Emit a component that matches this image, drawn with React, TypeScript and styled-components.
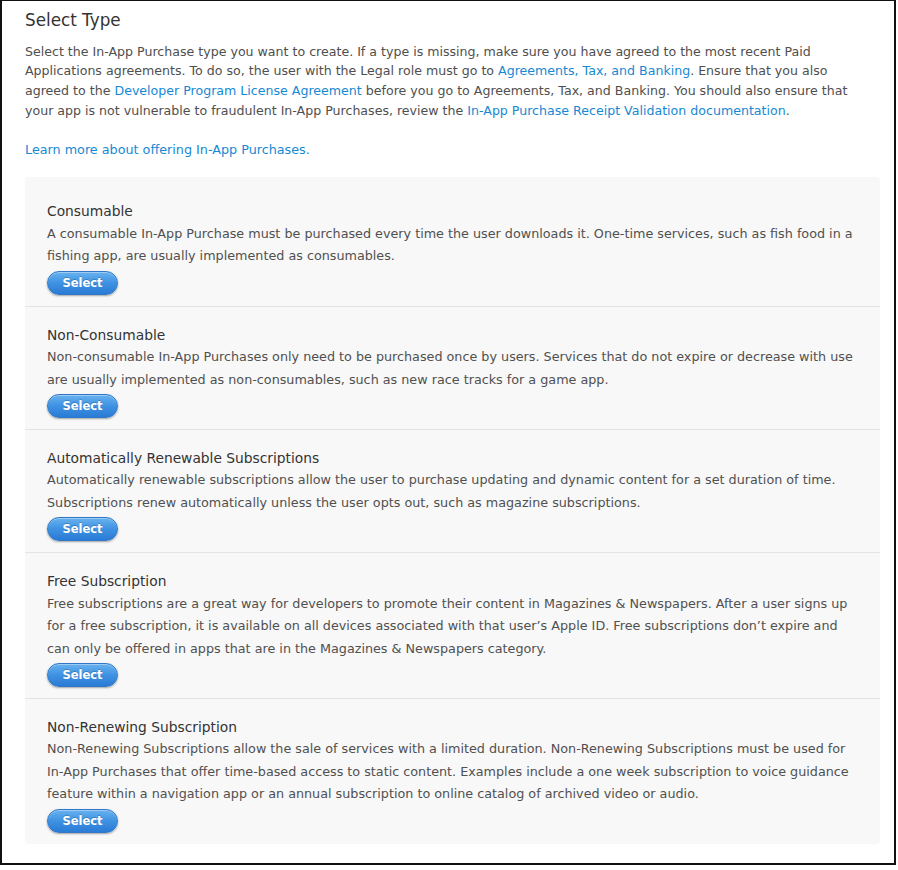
import React from "react";
import styled, { createGlobalStyle } from "styled-components";

const GlobalStyle = createGlobalStyle`
  html, body {
    margin: 0;
    padding: 0;
    background: #ffffff;
  }
  * { box-sizing: border-box; }
`;

const Frame = styled.div`
  width: 896px;
  border: 2px solid #111111;
  border-top-width: 1px;
  background: #ffffff;
  padding: 8px 14px 19px 23px;
  font-family: "DejaVu Sans", "Liberation Sans", sans-serif;
  -webkit-font-smoothing: antialiased;
`;

const Heading = styled.h1`
  margin: 0;
  font-size: 16.8px;
  line-height: 22px;
  font-weight: normal;
  color: #333333;
`;

const Intro = styled.p`
  margin: 10.5px 0 0;
  font-size: 12.6px;
  line-height: 19.75px;
  color: #4f4f4f;
  white-space: nowrap;
`;

const Learn = styled.p`
  margin: 19px 0 0;
  font-size: 12.75px;
  line-height: 19.75px;
`;

const Link = styled.a`
  color: #1689d4;
  text-decoration: none;
  cursor: pointer;
`;

const Panel = styled.div`
  margin-top: 18px;
  background: #f8f8f8;
  border-radius: 4px;
  padding: 6px 0 0;
  display: flex;
  flex-direction: column;
`;

const Row = styled.section<{ $last?: boolean }>`
  padding: 18px 22px 10.75px;
  border-bottom: ${(p) => (p.$last ? "none" : "1px solid #e4e4e4")};
  display: flex;
  flex-direction: column;
  align-items: flex-start;
`;

const RowTitle = styled.h2`
  margin: 0;
  font-size: 13.8px;
  line-height: 21.5px;
  font-weight: normal;
  color: #333333;
`;

const Desc = styled.p`
  margin: 0;
  font-size: 12.75px;
  line-height: 22.5px;
  color: #505050;
  white-space: nowrap;
`;

const Line = styled.span`
  display: block;
`;

const SelectButton = styled.button`
  margin-top: 3px;
  width: 71px;
  height: 24px;
  border-radius: 12px;
  border: 1px solid #2f78c9;
  background: linear-gradient(to bottom, #68b2ef 0%, #3e92e2 50%, #2a7bd5 100%);
  box-shadow: 0 1px 2px rgba(0, 0, 0, 0.35), inset 0 1px 0 rgba(255, 255, 255, 0.35);
  color: #ffffff;
  font-family: "DejaVu Sans", "Liberation Sans", sans-serif;
  font-weight: bold;
  font-size: 11.5px;
  line-height: 22px;
  padding: 0;
  text-shadow: 0 -1px 0 rgba(0, 0, 0, 0.2);
  cursor: pointer;
`;

type PurchaseType = { title: string; lines: string[] };

const types: PurchaseType[] = [
  {
    title: "Consumable",
    lines: [
      "A consumable In-App Purchase must be purchased every time the user downloads it. One-time services, such as fish food in a",
      "fishing app, are usually implemented as consumables.",
    ],
  },
  {
    title: "Non-Consumable",
    lines: [
      "Non-consumable In-App Purchases only need to be purchased once by users. Services that do not expire or decrease with use",
      "are usually implemented as non-consumables, such as new race tracks for a game app.",
    ],
  },
  {
    title: "Automatically Renewable Subscriptions",
    lines: [
      "Automatically renewable subscriptions allow the user to purchase updating and dynamic content for a set duration of time.",
      "Subscriptions renew automatically unless the user opts out, such as magazine subscriptions.",
    ],
  },
  {
    title: "Free Subscription",
    lines: [
      "Free subscriptions are a great way for developers to promote their content in Magazines & Newspapers. After a user signs up",
      "for a free subscription, it is available on all devices associated with that user\u2019s Apple ID. Free subscriptions don\u2019t expire and",
      "can only be offered in apps that are in the Magazines & Newspapers category.",
    ],
  },
  {
    title: "Non-Renewing Subscription",
    lines: [
      "Non-Renewing Subscriptions allow the sale of services with a limited duration. Non-Renewing Subscriptions must be used for",
      "In-App Purchases that offer time-based access to static content. Examples include a one week subscription to voice guidance",
      "feature within a navigation app or an annual subscription to online catalog of archived video or audio.",
    ],
  },
];

export default function App() {
  return (
    <>
      <GlobalStyle />
      <Frame>
        <Heading>Select Type</Heading>
        <Intro>
          <Line>
            Select the In-App Purchase type you want to create. If a type is missing, make sure you have agreed to the most recent Paid
          </Line>
          <Line>
            Applications agreements. To do so, the user with the Legal role must go to{" "}
            <Link>Agreements, Tax, and Banking</Link>. Ensure that you also
          </Line>
          <Line>
            agreed to the <Link>Developer Program License Agreement</Link> before you go to Agreements, Tax, and Banking. You should also ensure that
          </Line>
          <Line>
            your app is not vulnerable to fraudulent In-App Purchases, review the{" "}
            <Link>In-App Purchase Receipt Validation documentation</Link>.
          </Line>
        </Intro>
        <Learn>
          <Link>Learn more about offering In-App Purchases.</Link>
        </Learn>
        <Panel>
          {types.map((t, i) => (
            <Row key={t.title} $last={i === types.length - 1}>
              <RowTitle>{t.title}</RowTitle>
              <Desc>
                {t.lines.map((l) => (
                  <Line key={l}>{l}</Line>
                ))}
              </Desc>
              <SelectButton type="button">Select</SelectButton>
            </Row>
          ))}
        </Panel>
      </Frame>
    </>
  );
}
